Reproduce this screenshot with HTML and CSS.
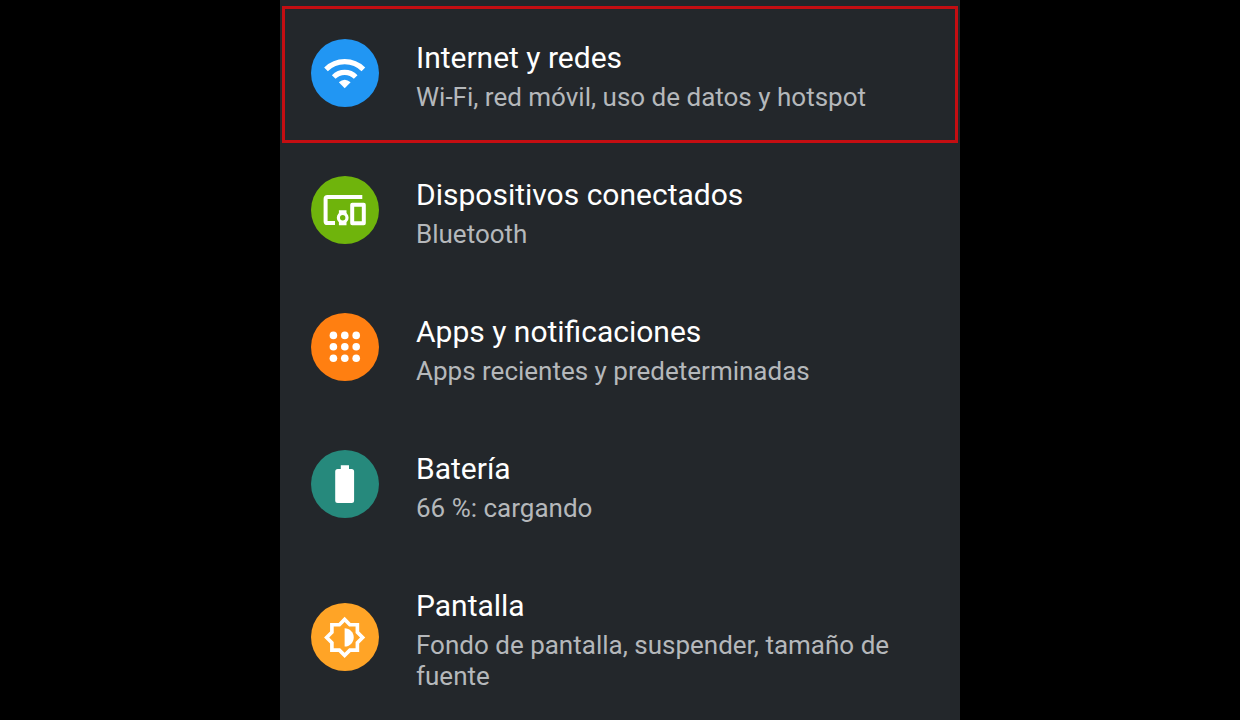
FILE: index.html
```html
<!DOCTYPE html>
<html lang="es">
<head>
<meta charset="utf-8">
<meta name="viewport" content="width=device-width, initial-scale=1">
<title>Ajustes</title>
<link rel="stylesheet" href="styles.css">
</head>
<body>
<main class="panel">
  <nav class="list" aria-label="Ajustes">
    <a class="row row--selected" href="#internet">
      <svg class="icon icon--blue" viewBox="0 0 68 68" aria-hidden="true">
        <g fill="none" stroke="#fff" stroke-width="5.2">
          <path d="M15 30.4a26.4 26.4 0 0 1 37.4 0"/>
          <path d="M22.7 38a15.6 15.6 0 0 1 22 0"/>
        </g>
        <path fill="#fff" d="M27.8 43.2q5.900-5 11.800 0L33.700 49.200z"/>
      </svg>
      <span class="text">
        <span class="title">Internet y redes</span>
        <span class="summary">Wi-Fi, red móvil, uso de datos y hotspot</span>
      </span>
    </a>
    <a class="row" href="#dispositivos">
      <svg class="icon icon--green" viewBox="0 0 68 68" aria-hidden="true">
        <g fill="none" stroke="#fff" stroke-width="4" stroke-linejoin="round">
          <path d="M51.300 21H16.500q-1.900 0-1.900 1.900v22.300q0 1.900 1.900 1.900H24"/>
          <path d="M41.200 28.800h11.600v18.500H41.200z"/>
          <circle cx="31.700" cy="41.700" r="4.300" stroke-width="3.200"/>
        </g>
        <path fill="#fff" d="M27.900 34.300h7.600v4l-3.800-1.200-3.800 1.200zM27.900 49.200h7.600v-4l-3.800 1.200-3.800-1.200z"/>
      </svg>
      <span class="text">
        <span class="title">Dispositivos conectados</span>
        <span class="summary">Bluetooth</span>
      </span>
    </a>
    <a class="row" href="#apps">
      <svg class="icon icon--orange" viewBox="0 0 68 68" aria-hidden="true">
        <g fill="#fff">
          <circle cx="22.4" cy="22.4" r="3.8"/><circle cx="33.8" cy="22.4" r="3.8"/><circle cx="45.2" cy="22.4" r="3.8"/>
          <circle cx="22.4" cy="33.8" r="3.8"/><circle cx="33.8" cy="33.8" r="3.8"/><circle cx="45.2" cy="33.8" r="3.8"/>
          <circle cx="22.4" cy="45.2" r="3.8"/><circle cx="33.8" cy="45.2" r="3.8"/><circle cx="45.2" cy="45.2" r="3.8"/>
        </g>
      </svg>
      <span class="text">
        <span class="title">Apps y notificaciones</span>
        <span class="summary">Apps recientes y predeterminadas</span>
      </span>
    </a>
    <a class="row" href="#bateria">
      <svg class="icon icon--teal" viewBox="0 0 68 68" aria-hidden="true">
        <path fill="#fff" d="M29.800 15.200H38V19h2.600q2.500 0 2.500 2.500v29q0 2.500-2.500 2.500H26.700q-2.500 0-2.500-2.500v-29q0-2.500 2.500-2.500h3.100z"/>
      </svg>
      <span class="text">
        <span class="title">Batería</span>
        <span class="summary">66 %: cargando</span>
      </span>
    </a>
    <a class="row" href="#pantalla">
      <svg class="icon icon--amber" viewBox="0 0 68 68" aria-hidden="true">
        <g fill="#fff" transform="translate(11.8 12.6) scale(1.82)">
          <path fill-rule="evenodd" d="M20 8.690V4h-4.690L12 .69 8.690 4H4v4.690L.69 12 4 15.310V20h4.690L12 23.310 15.310 20H20v-4.690L23.310 12zM18 14.480V18h-3.520L12 20.480 9.520 18H6v-3.520L3.520 12 6 9.520V6h3.520L12 3.520 14.480 6H18v3.520L20.480 12z"/>
          <path d="M12 7v10c2.760 0 5-2.240 5-5s-2.240-5-5-5z"/>
        </g>
      </svg>
      <span class="text">
        <span class="title">Pantalla</span>
        <span class="summary">Fondo de pantalla, suspender, tamaño de fuente</span>
      </span>
    </a>
  </nav>
</main>
</body>
</html>
```

FILE: styles.css
```css
* {
  box-sizing: border-box;
}

body {
  margin: 0;
  background: #000;
  font-family: Roboto, "Noto Sans", sans-serif;
}

.panel {
  max-width: 680px;
  min-height: 100vh;
  margin: 0 auto;
  padding: 6px 2px 0;
  background: #23272b;
}

.list {
  display: flex;
  flex-direction: column;
}

.row {
  display: flex;
  align-items: center;
  gap: 37px;
  padding: 24px 26px 27px;
  border: 3px solid transparent;
  color: #fff;
  text-decoration: none;
}

.row:last-child {
  padding-bottom: 0;
}

.row--selected {
  border-color: #c40e12;
}

.icon {
  flex: none;
  width: 68px;
  height: 68px;
  border-radius: 50%;
}

.icon--blue {
  background: #2196f3;
}

.icon--green {
  background: #6fb40c;
}

.icon--orange {
  background: #ff7f11;
}

.icon--teal {
  background: #26897c;
}

.icon--amber {
  background: #ffa426;
}

.text {
  display: flex;
  flex-direction: column;
  gap: 6px;
  padding-top: 7px;
}

.title {
  font-size: 30px;
  line-height: 36px;
}

.summary {
  color: #b5b8bb;
  font-size: 26px;
  line-height: 31px;
}
```
